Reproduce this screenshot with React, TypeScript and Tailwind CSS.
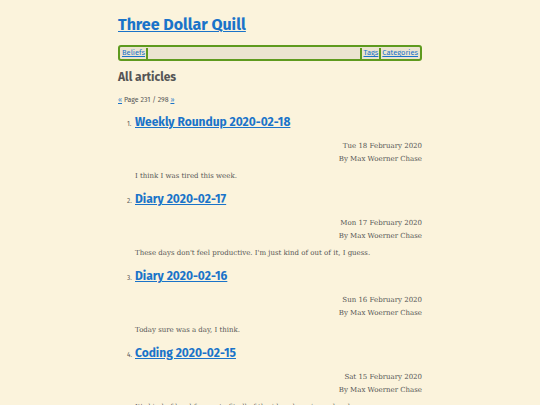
const articles = [
  {
    n: 1,
    title: "Weekly Roundup 2020-02-18",
    date: "Tue 18 February 2020",
    summary: "I think I was tired this week.",
  },
  {
    n: 2,
    title: "Diary 2020-02-17",
    date: "Mon 17 February 2020",
    summary: "These days don't feel productive. I'm just kind of out of it, I guess.",
  },
  {
    n: 3,
    title: "Diary 2020-02-16",
    date: "Sun 16 February 2020",
    summary: "Today sure was a day, I think.",
  },
  {
    n: 4,
    title: "Coding 2020-02-15",
    date: "Sat 15 February 2020",
    summary: "It's kind of hard for me to fit all of the ideas here in my head.",
  },
];

const sans = "font-['Fira_Sans','Open_Sans',sans-serif]";
const serif = "font-['DejaVu_Serif',serif]";

export default function App() {
  return (
    <div className="h-[405px] w-full overflow-hidden bg-[#fbf3dc] text-[#555]">
      <div className="mx-auto w-[304px] pt-[14px]">
        <h1 className={`${sans} text-[16px] font-bold leading-[22px] text-[#1a73c9] underline`}>
          <a href="#">Three Dollar Quill</a>
        </h1>

        <nav className={`${sans} mt-[9px] flex h-[16px] items-center rounded-[3px] border-2 border-[#5e9a1e] bg-[#ebe4d0] px-[2px] text-[7.5px] leading-none`}>
          <a href="#" className="text-[#1a73c9] underline">Beliefs</a>
          <span className="mx-[1px] h-[11px] w-[2px] bg-[#5e9a1e]" />
          <span className="flex-1" />
          <span className="mx-[1px] h-[11px] w-[2px] bg-[#5e9a1e]" />
          <a href="#" className="text-[#1a73c9] underline">Tags</a>
          <span className="mx-[1px] h-[11px] w-[2px] bg-[#5e9a1e]" />
          <a href="#" className="text-[#1a73c9] underline">Categories</a>
        </nav>

        <h2 className={`${sans} mt-[8px] text-[12px] font-bold leading-[16px] text-[#555]`}>All articles</h2>

        <p className={`${sans} mt-[10px] text-[7px] leading-[10px]`}>
          <a href="#" className="text-[#1a73c9] underline">«</a> Page 231 / 298{" "}
          <a href="#" className="text-[#1a73c9] underline">»</a>
        </p>

        <ol className="mt-[9px] pl-[17px]">
          {articles.map((a) => (
            <li key={a.n} className="mb-[9px]">
              <div className="flex items-baseline">
                <span className={`${sans} -ml-[8px] w-[8px] text-[6.5px]`}>{a.n}.</span>
                <a href="#" className={`${sans} text-[12px] font-bold leading-[16px] text-[#1a73c9] underline`}>
                  {a.title}
                </a>
              </div>
              <div className={`${serif} mt-[10px] text-right text-[7px] leading-[12.5px]`}>
                <div>{a.date}</div>
                <div>By Max Woerner Chase</div>
              </div>
              <p className={`${serif} mt-[5px] text-[7px] leading-[12px]`}>{a.summary}</p>
            </li>
          ))}
        </ol>
      </div>
    </div>
  );
}
